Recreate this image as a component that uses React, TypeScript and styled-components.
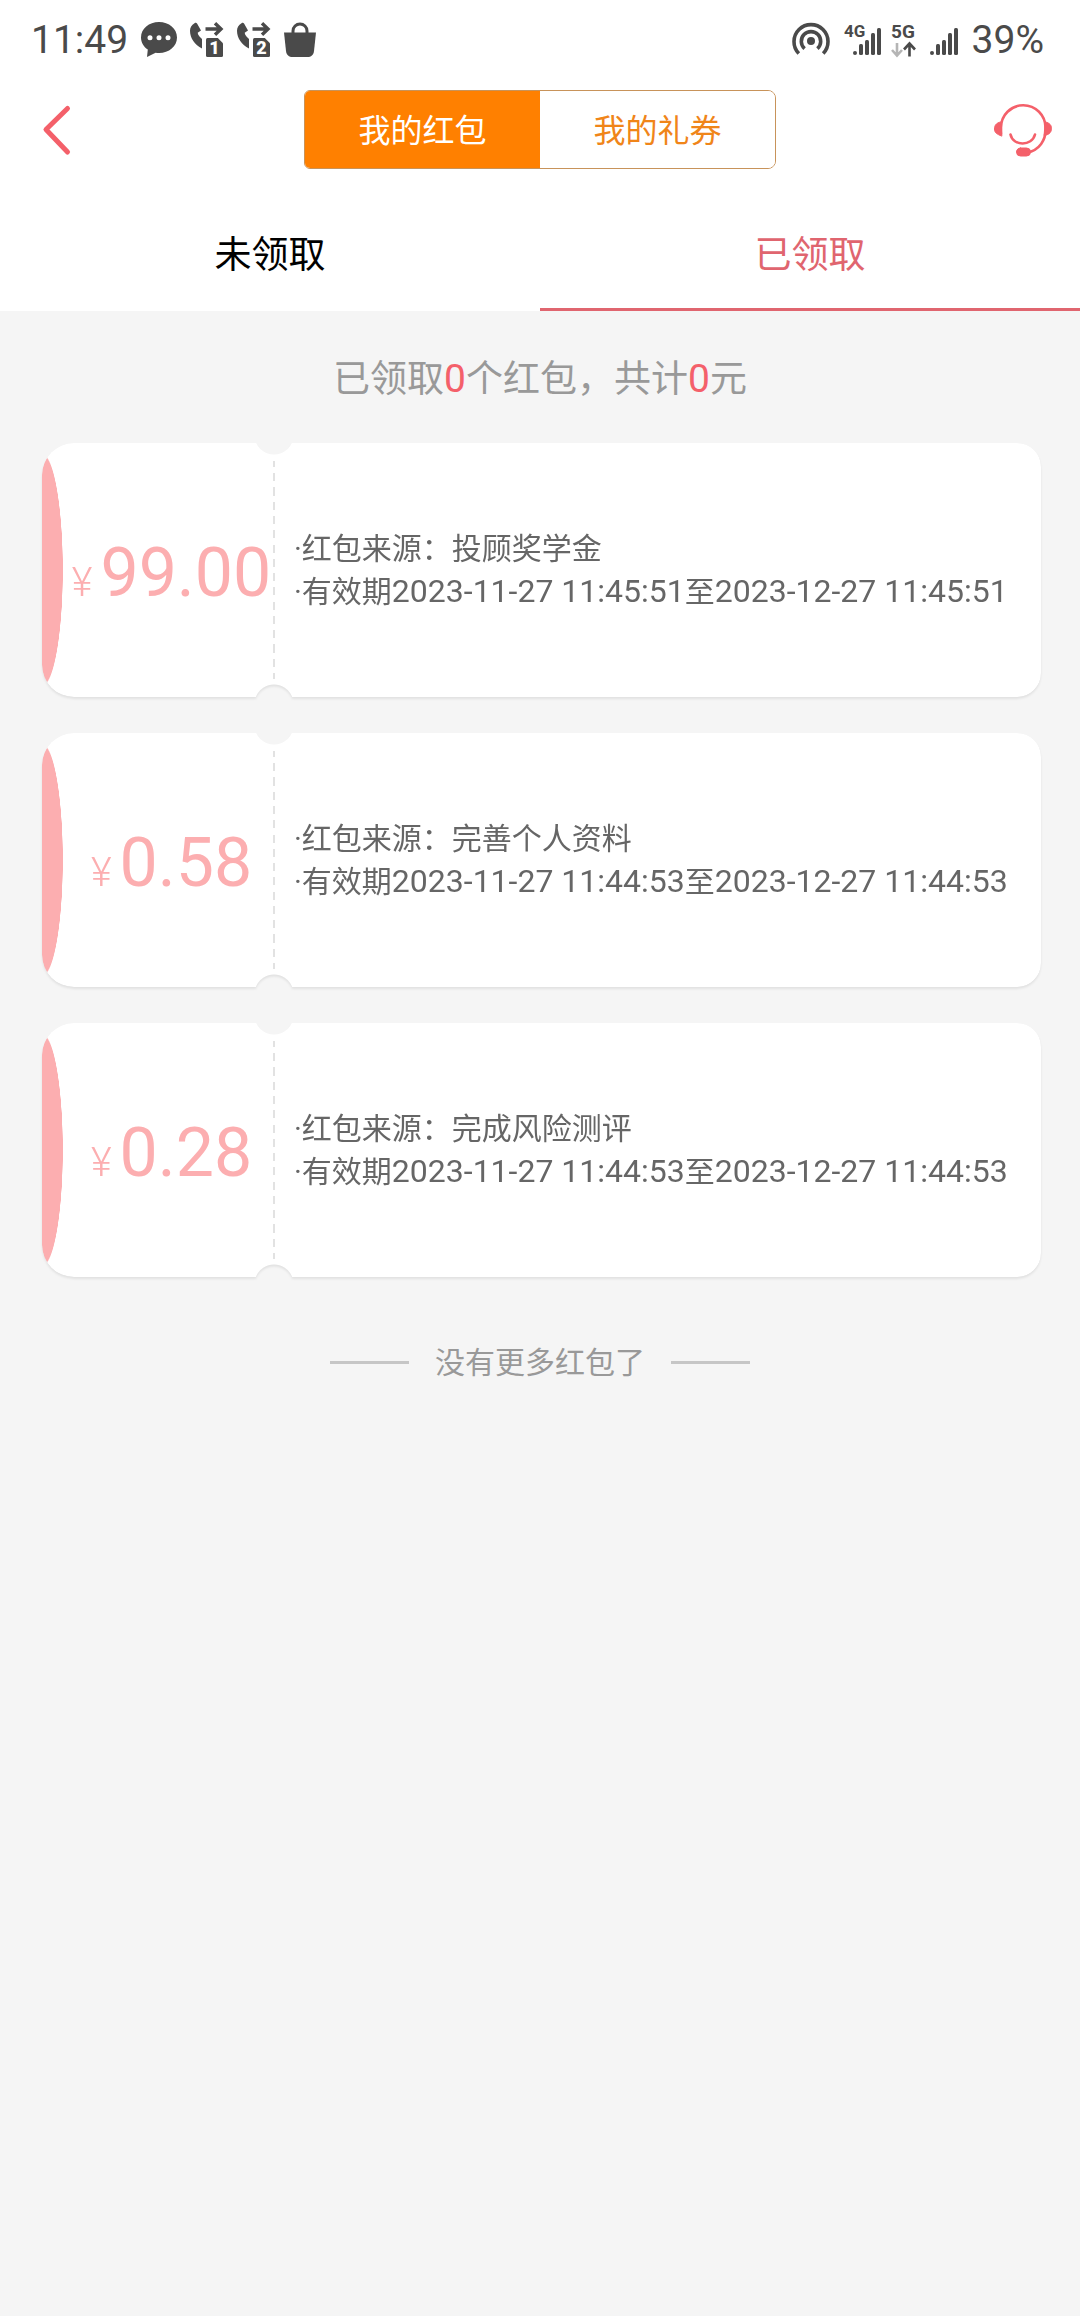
import React, { useState } from "react";
import styled, { createGlobalStyle } from "styled-components";

const color = {
  page: "#f5f5f5",
  orange: "#ff8000",
  orangeText: "#f08519",
  orangeLine: "#c8935a",
  red: "#f4606a",
  tabRed: "#e0656f",
  pink: "#fcaeb0",
  ink: "#4a4a4a",
  body: "#666666",
  muted: "#999999",
};

const GlobalStyle = createGlobalStyle`
  * { box-sizing: border-box; }
  body {
    margin: 0;
    background: ${color.page};
    font-family: Roboto, "Noto Sans CJK SC", sans-serif;
  }
  button { font: inherit; border: 0; padding: 0; background: none; cursor: pointer; }
`;

const Page = styled.div`
  display: flex;
  flex-direction: column;
  min-height: 100vh;
  background: ${color.page};
`;

const Top = styled.header`
  background: #fff;
`;

const StatusBar = styled.div`
  display: flex;
  justify-content: space-between;
  height: 80px;
  padding: 0 36px 0 31px;
  color: ${color.ink};
  font-size: 39px;
`;

const StatusGroup = styled.div<{ $gap: number }>`
  display: flex;
  align-items: center;
  gap: ${(p) => p.$gap}px;

  svg { display: block; fill: currentColor; overflow: visible; }
`;

const NavBar = styled.nav`
  display: grid;
  grid-template-columns: 1fr 472px 1fr;
  align-items: center;
  padding: 10px 27px 28px;
`;

const IconButton = styled.button<{ $end?: boolean }>`
  display: flex;
  justify-self: ${(p) => (p.$end ? "end" : "start")};
  color: ${color.red};
`;

const Segments = styled.div`
  display: grid;
  grid-template-columns: 1fr 1fr;
  height: 79px;
  border: 1px solid ${color.orangeLine};
  border-radius: 6px 8px 8px 6px;
  overflow: hidden;
`;

const Segment = styled.button<{ $active: boolean }>`
  && {
    padding-bottom: 4px;
    background: ${(p) => (p.$active ? color.orange : "#fff")};
  }
  color: ${(p) => (p.$active ? "#fff" : color.orangeText)};
  font-size: 32px;
`;

const Tabs = styled.div`
  display: grid;
  grid-template-columns: 1fr 1fr;
`;

const Tab = styled.button<{ $active: boolean }>`
  && {
    height: 114px;
    padding-bottom: 2px;
    border-bottom: 3px solid ${(p) => (p.$active ? color.tabRed : "transparent")};
  }
  color: ${(p) => (p.$active ? color.tabRed : "#000")};
  font-size: 37px;
`;

const Summary = styled.p`
  margin: 0;
  padding-top: 6px;
  line-height: 126px;
  text-align: center;
  color: ${color.muted};
  font-size: 37px;
`;

const Count = styled.span`
  color: ${color.red};
  font-size: 39px;
  line-height: 1;
`;

const List = styled.ul`
  display: flex;
  flex-direction: column;
  gap: 36px;
  margin: 0;
  padding: 0 39px 0 42px;
  list-style: none;
`;

const Shadow = styled.li`
  filter: drop-shadow(0 2px 1px rgba(0, 0, 0, 0.08));
`;

const Card = styled.article`
  display: grid;
  grid-template-columns: 233px 1fr;
  min-height: 254px;
  border-radius: 32px 24px 24px 32px;
  background: radial-gradient(ellipse 21px 117px at 0 50%, ${color.pink} 98%, #fff 100%);
  mask-image:
    radial-gradient(circle at 232px -8px, transparent 19px, #000 20px),
    radial-gradient(circle at 232px calc(100% + 7px), transparent 19px, #000 20px);
  mask-composite: intersect;
`;

const Amount = styled.div`
  display: flex;
  align-items: center;
  justify-content: center;
  padding: 5px 0 0 28px;
  margin: 18px 0;
  border-right: 2px solid;
  border-image: repeating-linear-gradient(#e2e2e2 0 8px, transparent 8px 14px) 2;
  color: ${color.pink};
`;

const Price = styled.div`
  display: flex;
  align-items: baseline;
  gap: 8px;
  font-size: 68px;
  white-space: nowrap;
`;

const Yen = styled.span`
  font-size: 40px;
  font-weight: 300;
  line-height: 1;
`;

const Details = styled.div`
  display: flex;
  flex-direction: column;
  justify-content: center;
  padding-left: 19px;
  color: ${color.body};
  font-size: 30px;
  line-height: 43px;
  white-space: nowrap;

  p { margin: 0; }
`;

const Stamp = styled.time`
  font-size: 32px;
`;

const ListEnd = styled.footer`
  display: flex;
  align-items: center;
  justify-content: center;
  gap: 26px;
  padding: 64px 0;
  color: ${color.muted};
  font-size: 30px;
  line-height: 43px;

  &::before,
  &::after {
    content: "";
    width: 79px;
    height: 3px;
    background: #c6c6c6;
  }
`;

const ChatIcon = () => (
  <svg width="36" height="36" viewBox="0 0 36 36">
    <path
      fillRule="evenodd"
      d="M18 0C8 0 0 6.700 0 15.500c0 5 2.600 9.300 6.800 12.100L6 35l8.600-4.300c1.100.2 2.200.3 3.400.3 10 0 18-6.700 18-15.500S28 0 18 0ZM9 13.200a2.500 2.500 0 1 1 0 5 2.500 2.500 0 0 1 0-5Zm9 0a2.500 2.500 0 1 1 0 5 2.500 2.500 0 0 1 0-5Zm9 0a2.500 2.500 0 1 1 0 5 2.500 2.500 0 0 1 0-5Z"
    />
  </svg>
);

const ForwardIcon = ({ sim }: { sim: string }) => (
  <svg width="34" height="36" viewBox="0 0 34 36">
    <path d="M4.500 1.200C1.500 3 0 5.600 0 8.800c0 7.400 4.800 14.200 12 17.800V17l-2.300-2.300c-1-1.200-1.700-2.400-2-4L11 8.400 7.200 1.700c-.7-1-1.700-1.100-2.700-.5Z" />
    <path d="M15.500 7h15M25 1.200 31 7l-6 5.800" fill="none" stroke="currentColor" strokeWidth="3.400" />
    <path d="M17.500 16h10.300l5.200 5.200v12.300a1.500 1.500 0 0 1-1.500 1.500h-14a1.500 1.500 0 0 1-1.500-1.500v-16a1.500 1.500 0 0 1 1.500-1.500Z" />
    <text x="24.500" y="32" textAnchor="middle" fontSize="18" fontWeight="900" style={{ fill: "#fff" }}>
      {sim}
    </text>
  </svg>
);

const BagIcon = () => (
  <svg width="32" height="36" viewBox="0 0 32 36">
    <path d="M0 10.500h32l-2 18.500c-.5 4-3 6-6.500 6h-15C5 35 2.500 33 2 29Z" />
    <path d="M9 12V9a7 7 0 0 1 14 0v3" fill="none" stroke="currentColor" strokeWidth="3" />
  </svg>
);

const HotspotIcon = () => (
  <svg width="42" height="36" viewBox="0 0 42 36">
    <circle cx="19" cy="19" r="4" />
    <g fill="none" stroke="currentColor" strokeWidth="3.600">
      <path d="M12.600 26.600A9.700 9.700 0 1 1 25.400 26.600" />
      <path d="M6.800 31.500A17 17 0 1 1 31.200 31.500" />
    </g>
  </svg>
);

const SignalBars = ({ x }: { x: number }) => (
  <g>
    <circle cx={x + 2} cy="31" r="2" />
    <rect x={x + 6} y="22" width="4" height="11" rx="1.500" />
    <rect x={x + 12} y="18" width="4" height="15" rx="1.500" />
    <rect x={x + 18} y="11" width="4" height="22" rx="1.500" />
    <rect x={x + 24} y="6" width="4" height="27" rx="1.500" />
  </g>
);

const Signal4G = () => (
  <svg width="37" height="36" viewBox="0 0 37 36">
    <text x="0" y="15" fontSize="17" fontWeight="700">4G</text>
    <SignalBars x={9} />
  </svg>
);

const Signal5G = () => (
  <svg width="71" height="36" viewBox="0 0 71 36">
    <text x="0" y="16" fontSize="19" fontWeight="700">5G</text>
    <g fill="none" strokeWidth="2.600">
      <path d="M6 21v12M1 28l5 5.500 5-5.500" stroke="#b5b5b5" />
      <path d="M18.500 34.500V22M13 27.500l5.500-6 5.500 6" stroke="currentColor" />
    </g>
    <SignalBars x={39} />
  </svg>
);

const BackIcon = () => (
  <svg width="52" height="52" viewBox="-8 0 52 52" fill="none" stroke="currentColor" strokeWidth="5" strokeLinecap="round" strokeLinejoin="round">
    <path d="M32.500 4.500 11 25.500 32.500 48" />
  </svg>
);

const ServiceIcon = () => (
  <svg width="60" height="54" viewBox="0 0 60 54" fill="none" stroke="currentColor" strokeWidth="2.600" strokeLinecap="round">
    <path d="M8 31V24.500a22 22 0 0 1 44.500 0C53.500 37 46 47.500 34 49.500" />
    <path d="M17.500 31.500c2.500 12 21.500 12 24.500 0" />
    <path d="M7.500 19C3 20 1.500 22.500 1.500 26s2 5 7 7Z" fill="currentColor" strokeWidth="1" />
    <path d="M52.500 19c4.500 1 6 3.500 6 6.500s-1.500 6-7 7Z" fill="currentColor" strokeWidth="1" />
    <rect x="23.500" y="45" width="14" height="8" rx="4" fill="currentColor" strokeWidth="1" />
  </svg>
);

const packets = [
  { amount: "99.00", source: "投顾奖学金", from: "2023-11-27 11:45:51", to: "2023-12-27 11:45:51" },
  { amount: "0.58", source: "完善个人资料", from: "2023-11-27 11:44:53", to: "2023-12-27 11:44:53" },
  { amount: "0.28", source: "完成风险测评", from: "2023-11-27 11:44:53", to: "2023-12-27 11:44:53" },
];

const segments = ["我的红包", "我的礼券"];
const tabs = ["未领取", "已领取"];

export default function App() {
  const [segment, setSegment] = useState(0);
  const [tab, setTab] = useState(1);

  return (
    <Page>
      <GlobalStyle />
      <Top>
        <StatusBar>
          <StatusGroup $gap={13}>
            <span>11:49</span>
            <ChatIcon />
            <ForwardIcon sim="1" />
            <ForwardIcon sim="2" />
            <BagIcon />
          </StatusGroup>
          <StatusGroup $gap={10}>
            <HotspotIcon />
            <Signal4G />
            <Signal5G />
            <span>39%</span>
          </StatusGroup>
        </StatusBar>
        <NavBar>
          <IconButton type="button" aria-label="返回">
            <BackIcon />
          </IconButton>
          <Segments>
            {segments.map((label, i) => (
              <Segment key={label} type="button" $active={segment === i} onClick={() => setSegment(i)}>
                {label}
              </Segment>
            ))}
          </Segments>
          <IconButton type="button" aria-label="客服" $end>
            <ServiceIcon />
          </IconButton>
        </NavBar>
        <Tabs role="tablist">
          {tabs.map((label, i) => (
            <Tab key={label} type="button" role="tab" aria-selected={tab === i} $active={tab === i} onClick={() => setTab(i)}>
              {label}
            </Tab>
          ))}
        </Tabs>
      </Top>
      <main>
        <Summary>
          已领取<Count>0</Count>个红包，共计<Count>0</Count>元
        </Summary>
        <List>
          {packets.map((p) => (
            <Shadow key={p.source}>
              <Card>
                <Amount>
                  <Price>
                    <Yen>¥</Yen>
                    <span>{p.amount}</span>
                  </Price>
                </Amount>
                <Details>
                  <p>·红包来源：{p.source}</p>
                  <p>
                    ·有效期<Stamp>{p.from}</Stamp>至<Stamp>{p.to}</Stamp>
                  </p>
                </Details>
              </Card>
            </Shadow>
          ))}
        </List>
      </main>
      <ListEnd>没有更多红包了</ListEnd>
    </Page>
  );
}
